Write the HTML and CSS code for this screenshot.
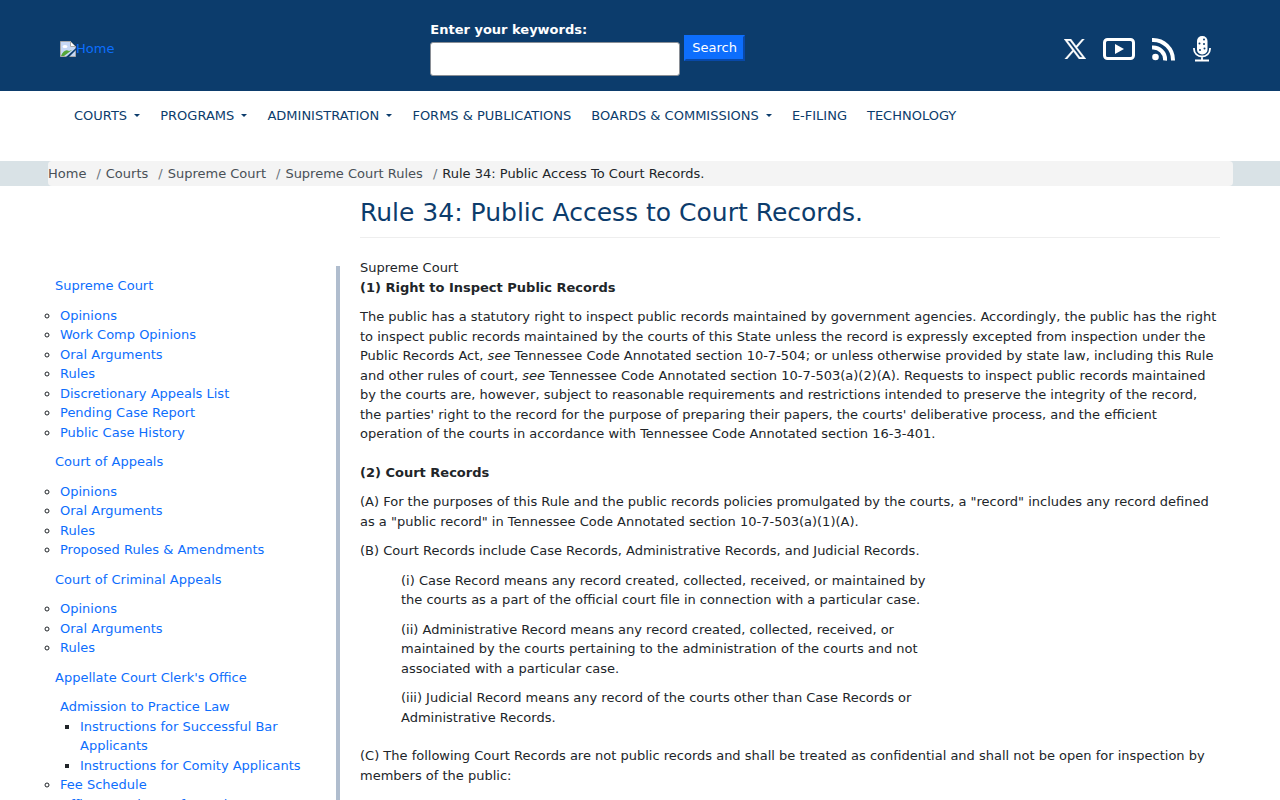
FILE: index.html
```html
<!DOCTYPE html>
<html lang="en">
<head>
<meta charset="utf-8">
<meta name="viewport" content="width=device-width, initial-scale=1">
<title>Rule 34: Public Access to Court Records.</title>
<link rel="stylesheet" href="styles.css">
</head>
<body>
<header class="site-header">
  <div class="header-inner">
    <a class="brand" href="#">
      <svg class="brand-icon" viewBox="0 0 16 16" aria-hidden="true">
        <path d="M.5.5h10l5 5v10H.5z" fill="#c6d8f5" stroke="#a8a8a8"/>
        <path d="M10.500.500v5h5z" fill="#fff" stroke="#a8a8a8"/>
        <ellipse cx="5" cy="5.500" rx="2.500" ry="1.500" fill="#fff"/>
        <path d="M1 15c2-5 5-7 8-5l3-1-8 6z" fill="#55a63a"/>
        <path d="M16 7v2L9 16H6z" fill="#0c3c6c"/>
      </svg><span>Home</span>
    </a>
    <form class="search">
      <div class="search-field">
        <label for="keywords">Enter your keywords:</label>
        <input id="keywords" type="text">
      </div>
      <button type="submit">Search</button>
    </form>
    <div class="social">
      <a href="#" aria-label="X"><svg width="22" height="20" viewBox="0 0 24 22" fill="#fff" stroke="#fff" stroke-width=".5"><path fill-rule="evenodd" d="M0 0h7.500l5.700 7.700L20 0h2.300l-8 9.300L24 22h-7.500l-6.200-8.200L3.200 22H.8l8.400-9.700zM3.600 1.800l13.800 18.400h3L6.600 1.800z"/></svg></a>
      <a href="#" aria-label="YouTube"><svg width="32" height="22" viewBox="0 0 32 22"><rect x="1.500" y="1.500" width="29" height="19" rx="3" fill="none" stroke="#fff" stroke-width="3"/><path d="M12 6l9 5-9 5z" fill="#fff"/></svg></a>
      <a href="#" aria-label="RSS"><svg width="24" height="24" viewBox="0 0 24 24" fill="none" stroke="#fff" stroke-width="4"><circle cx="3.500" cy="20" r="3.300" fill="#fff" stroke="none"/><path d="M0 10.500A12 12 0 0 1 13 23.500M0 3A20 20 0 0 1 21 23.500"/></svg></a>
      <a href="#" aria-label="Podcasts"><svg width="18" height="26" viewBox="0 0 18 26"><rect x="4" y="0" width="10.500" height="18.500" rx="5" fill="#fff"/><path d="M1 12v1a8 7.500 0 0 0 16 0v-1M9 20v4M2 24.500h14" fill="none" stroke="#fff" stroke-width="1.800"/><g fill="#0c3c6c"><circle cx="11" cy="3.500" r="1"/><circle cx="6.500" cy="7.500" r="1"/><circle cx="11" cy="8" r="1"/><circle cx="7" cy="14" r="1"/><circle cx="11.500" cy="12.500" r="1"/></g></svg></a>
    </div>
  </div>
</header>
<nav class="main-nav" aria-label="Main">
  <a class="has-menu" href="#">COURTS </a>
  <a class="has-menu" href="#">PROGRAMS </a>
  <a class="has-menu" href="#">ADMINISTRATION </a>
  <a href="#">FORMS &amp; PUBLICATIONS</a>
  <a class="has-menu" href="#">BOARDS &amp; COMMISSIONS </a>
  <a href="#">E-FILING</a>
  <a href="#">TECHNOLOGY</a>
</nav>
<nav class="breadcrumb-bar" aria-label="Breadcrumb">
  <ol class="breadcrumb">
    <li><a href="#">Home</a></li>
    <li><a href="#">Courts</a></li>
    <li><a href="#">Supreme Court</a></li>
    <li><a href="#">Supreme Court Rules</a></li>
    <li>Rule 34: Public Access To Court Records.</li>
  </ol>
</nav>
<div class="layout">
  <aside class="sidebar">
    <p><a href="#">Supreme Court</a></p>
    <ul>
      <li><a href="#">Opinions</a></li>
      <li><a href="#">Work Comp Opinions</a></li>
      <li><a href="#">Oral Arguments</a></li>
      <li><a href="#">Rules</a></li>
      <li><a href="#">Discretionary Appeals List</a></li>
      <li><a href="#">Pending Case Report</a></li>
      <li><a href="#">Public Case History</a></li>
    </ul>
    <p><a href="#">Court of Appeals</a></p>
    <ul>
      <li><a href="#">Opinions</a></li>
      <li><a href="#">Oral Arguments</a></li>
      <li><a href="#">Rules</a></li>
      <li><a href="#">Proposed Rules &amp; Amendments</a></li>
    </ul>
    <p><a href="#">Court of Criminal Appeals</a></p>
    <ul>
      <li><a href="#">Opinions</a></li>
      <li><a href="#">Oral Arguments</a></li>
      <li><a href="#">Rules</a></li>
    </ul>
    <p><a href="#">Appellate Court Clerk's Office</a></p>
    <ul>
      <li class="plain"><a href="#">Admission to Practice Law</a>
        <ul>
          <li><a href="#">Instructions for Successful Bar Applicants</a></li>
          <li><a href="#">Instructions for Comity Applicants</a></li>
        </ul>
      </li>
      <li><a href="#">Fee Schedule</a></li>
      <li><a href="#">Office Locations/Information</a></li>
    </ul>
  </aside>
  <main class="content">
    <h1>Rule 34: Public Access to Court Records.</h1>
    <div>Supreme Court</div>
    <p><strong>(1) Right to Inspect Public Records</strong></p>
    <p class="section-end">The public has a statutory right to inspect public records maintained by government agencies. Accordingly, the public has the right to inspect public records maintained by the courts of this State unless the record is expressly excepted from inspection under the Public Records Act, <em>see</em> Tennessee Code Annotated section 10-7-504; or unless otherwise provided by state law, including this Rule and other rules of court, <em>see</em> Tennessee Code Annotated section 10-7-503(a)(2)(A). Requests to inspect public records maintained by the courts are, however, subject to reasonable requirements and restrictions intended to preserve the integrity of the record, the parties' right to the record for the purpose of preparing their papers, the courts' deliberative process, and the efficient operation of the courts in accordance with Tennessee Code Annotated section 16-3-401.</p>
    <p><strong>(2) Court Records</strong></p>
    <p>(A) For the purposes of this Rule and the public records policies promulgated by the courts, a "record" includes any record defined as a "public record" in Tennessee Code Annotated section 10-7-503(a)(1)(A).</p>
    <p>(B) Court Records include Case Records, Administrative Records, and Judicial Records.</p>
    <div class="indented">
      <p>(i) Case Record means any record created, collected, received, or maintained by the courts as a part of the official court file in connection with a particular case.</p>
      <p>(ii) Administrative Record means any record created, collected, received, or maintained by the courts pertaining to the administration of the courts and not associated with a particular case.</p>
      <p class="section-end">(iii) Judicial Record means any record of the courts other than Case Records or Administrative Records.</p>
    </div>
    <p>(C) The following Court Records are not public records and shall be treated as confidential and shall not be open for inspection by members of the public:</p>
  </main>
</div>
</body>
</html>
```
FILE: styles.css
```css
* { box-sizing: border-box; }

body {
  margin: 0;
  height: 100vh;
  overflow: hidden;
  background: #fff;
  color: #212529;
  font-family: "DejaVu Sans", Verdana, sans-serif;
  font-size: 13px;
  line-height: 1.5;
}

a { color: #0d6efd; text-decoration: none; }
ul, ol, p, h1 { margin: 0; padding: 0; }
p { margin-bottom: 10px; }

/* Header */
.site-header { background: #0c3c6c; }
.header-inner {
  display: grid;
  grid-template-columns: 32% 1fr auto;
  max-width: 1160px;
  min-height: 91px;
  margin: 0 auto;
  padding: 20px 9px 14px 0;
}
.brand { display: flex; align-items: center; align-self: center; }
.brand-icon { width: 16px; height: 16px; }
.search { display: flex; align-items: flex-start; gap: 4px; padding-left: 2px; }
.search-field { display: flex; flex-direction: column; gap: 2px; }
.search label { color: #fff; font-weight: bold; }
.search input {
  width: 250px;
  height: 34px;
  border: 1px solid #8a8f96;
  border-radius: 3px;
  background: #fff;
  padding: 6px 12px;
  font: inherit;
}
.search button {
  margin-top: 15px;
  padding: 1px 6px;
  border: 2px outset #0d6efd;
  background: #0d6efd;
  color: #fff;
  font: inherit;
}
.social { display: flex; align-items: center; gap: 17px; }
.social svg { display: block; }

/* Main navigation */
.main-nav {
  display: flex;
  gap: 20px;
  max-width: 1160px;
  min-height: 70px;
  margin: 0 auto;
  padding: 15px 14px;
}
.main-nav a { color: #0c3c6c; white-space: pre; }
.has-menu::after {
  content: "";
  display: inline-block;
  margin-left: 3px;
  vertical-align: 3px;
  border: 3px solid transparent;
  border-top-color: currentColor;
  border-bottom: 0;
}

/* Breadcrumb */
.breadcrumb-bar { background: #d9e2e6; padding: 0 47px 0 48px; }
.breadcrumb {
  display: flex;
  padding: 3px 0;
  border-radius: 4px;
  background: #f4f4f4;
  line-height: 19px;
  list-style: none;
}
.breadcrumb a { color: #495057; }
.breadcrumb li + li { padding-left: 10px; }
.breadcrumb li + li::before { content: "/"; padding-right: 5px; color: #6c757d; }

/* Page body */
.layout {
  display: grid;
  grid-template-columns: 1fr 3fr;
  max-width: 1200px;
  margin: 0 auto;
}
.sidebar {
  margin-top: 80px;
  padding: 10px 20px 10px 0;
  border-right: 4px solid #b0bdce;
}
.sidebar p { padding-left: 15px; }
.sidebar ul { margin-bottom: 10px; padding-left: 20px; list-style: circle; }
.sidebar ul ul { margin-bottom: 0; list-style: square; }
.sidebar .plain { list-style: none; }

.content { padding: 12px 20px; }
.content h1 {
  margin-bottom: 20px;
  padding-bottom: 9px;
  border-bottom: 1px solid #eee;
  color: #0c3c6c;
  font-size: 25px;
  font-weight: normal;
  line-height: 30px;
}
.content .section-end { margin-bottom: 19px; }
.indented { max-width: 580px; padding-left: 41px; }
```
